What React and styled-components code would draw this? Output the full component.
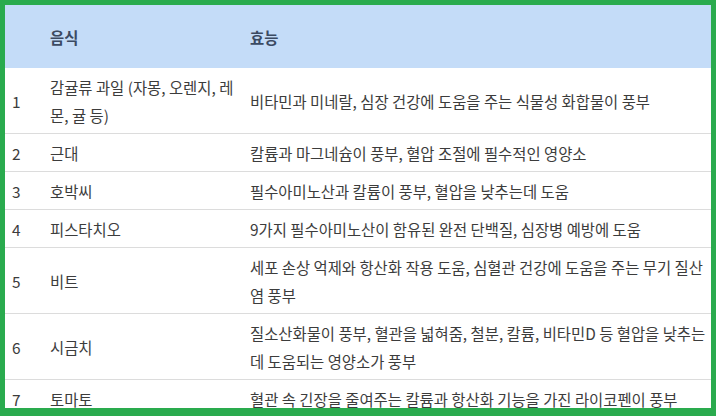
import React from 'react';
import styled, { createGlobalStyle } from 'styled-components';

const GlobalStyle = createGlobalStyle`
  html, body {
    margin: 0;
    padding: 0;
    background: #ffffff;
  }
  body {
    font-family: "Noto Sans CJK KR", "Noto Sans", "Liberation Sans", sans-serif;
  }
`;

const Frame = styled.div`
  box-sizing: border-box;
  width: 716px;
  height: 416px;
  border: 5px solid #2aab4e;
  border-bottom-width: 8px;
  overflow: hidden;
  background: #ffffff;
`;

const Table = styled.table`
  width: 100%;
  border-collapse: collapse;
  table-layout: fixed;
  font-size: 15.4px;
  color: #3c3c3c;
`;

const HeadCell = styled.th`
  height: 63px;
  padding: 0 4px 0 7px;
  background: #c4dcf8;
  color: #3b4a62;
  font-weight: 600;
  text-align: left;
  vertical-align: middle;
`;

const Row = styled.tr`
  border-bottom: 1px solid #dcdcdc;
`;

const Cell = styled.td`
  padding: 4.5px 4px 4.5px 7px;
  line-height: 28px;
  vertical-align: middle;
  overflow-wrap: break-word;
`;

const rows = [
  ['1', '감귤류 과일 (자몽, 오렌지, 레몬, 귤 등)', '비타민과 미네랄, 심장 건강에 도움을 주는 식물성 화합물이 풍부'],
  ['2', '근대', '칼륨과 마그네슘이 풍부, 혈압 조절에 필수적인 영양소'],
  ['3', '호박씨', '필수아미노산과 칼륨이 풍부, 혈압을 낮추는데 도움'],
  ['4', '피스타치오', '9가지 필수아미노산이 함유된 완전 단백질, 심장병 예방에 도움'],
  ['5', '비트', '세포 손상 억제와 항산화 작용 도움, 심혈관 건강에 도움을 주는 무기 질산염 풍부'],
  ['6', '시금치', '질소산화물이 풍부, 혈관을 넓혀줌, 철분, 칼륨, 비타민D 등 혈압을 낮추는데 도움되는 영양소가 풍부'],
  ['7', '토마토', '혈관 속 긴장을 줄여주는 칼륨과 항산화 기능을 가진 라이코펜이 풍부'],
];

export default function App() {
  return (
    <>
      <GlobalStyle />
      <Frame>
        <Table>
          <colgroup>
            <col style={{ width: 38 }} />
            <col style={{ width: 200 }} />
            <col />
          </colgroup>
          <thead>
            <tr>
              <HeadCell></HeadCell>
              <HeadCell>음식</HeadCell>
              <HeadCell>효능</HeadCell>
            </tr>
          </thead>
          <tbody>
            {rows.map((r) => (
              <Row key={r[0]}>
                <Cell>{r[0]}</Cell>
                <Cell>{r[1]}</Cell>
                <Cell>{r[2]}</Cell>
              </Row>
            ))}
          </tbody>
        </Table>
      </Frame>
    </>
  );
}
